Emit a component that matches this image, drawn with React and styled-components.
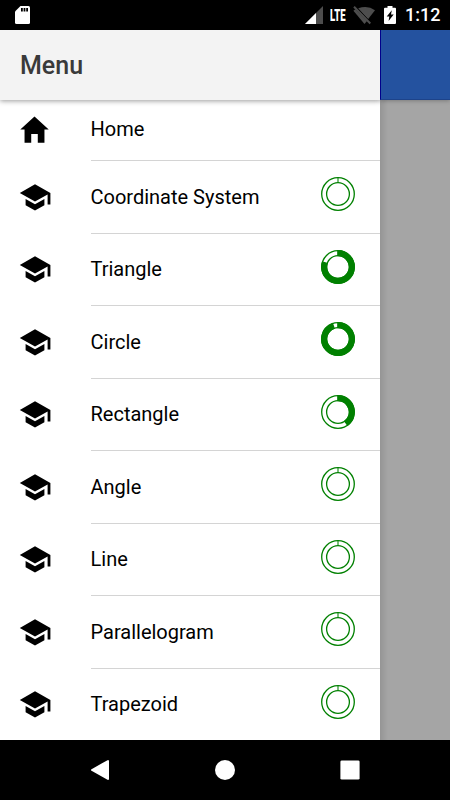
import React from 'react'
import styled, { createGlobalStyle } from 'styled-components'

const lessons = [
    { name: 'Coordinate System', progress: 0 },
    { name: 'Triangle', progress: 0.8 },
    { name: 'Circle', progress: 0.945 },
    { name: 'Rectangle', progress: 0.4 },
    { name: 'Angle', progress: 0 },
    { name: 'Line', progress: 0 },
    { name: 'Parallelogram', progress: 0 },
    { name: 'Trapezoid', progress: 0 }
]

const polar = (radius, turn) => {
    const angle = turn * 2 * Math.PI
    return `${18 + radius * Math.sin(angle)} ${18 - radius * Math.cos(angle)}`
}

function ProgressRing ({ value }){
    const large = value > 0.5 ? 1 : 0
    const arc = `M${polar(16.3, 0)}A16.3 16.3 0 ${large} 1 ${polar(16.3, value)}L${polar(11.4, value)}A11.4 11.4 0 ${large} 0 ${polar(11.4, 0)}Z`

    return <Ring viewBox='0 0 36 36'>
        <circle cx='18' cy='18' r='16.3' />
        <circle cx='18' cy='18' r='11.4' />
        <path d='M18 1.7V6.6' opacity='0.8' />
        {value > 0 && <path d={arc} fill='#008000' />}
    </Ring>
}

function HomeIcon (){
    return <ItemIcon viewBox='0 0 512 512'>
        <path d='M208 448V320h96v128h97.6V256H464L256 64 48 256h62.4v192z' />
    </ItemIcon>
}

function SchoolIcon (){
    return <ItemIcon viewBox='0 0 35 35'>
        <path d='M8.6 18.9v6.3l9.4 5.2 9.4-5.2v-6.3L18 24.2zM18 4.2L2.8 12.9 18 21.6l12.6-7.1v10.1h2.8V12.9z' />
    </ItemIcon>
}

function StatusBar (){
    return <Status>
        <svg width='15' height='18' viewBox='0 0 15 18'>
            <path fill='#fff' d='M5.5 0H13.5Q15 0 15 1.5V16.5Q15 18 13.5 18H1.5Q0 18 0 16.5V5.5z' />
            <path fill='#000' d='M6 2h1.8v3.6H6zM8.6 2h1.8v3.6H8.6zM11.2 2H13v3.6h-1.8z' />
        </svg>
        <StatusRight>
            <svg width='18' height='18' viewBox='0 0 18 18'>
                <path fill='#4d4d4d' d='M0 18L18 0v18z' />
                <path fill='#fff' d='M0 18L11 7v11z' />
            </svg>
            <Network>LTE</Network>
            <svg width='22' height='19' viewBox='0 0 22 19'>
                <path fill='#4d4d4d' d='M5.2 2.3Q14.5-1.3 22 4.2L15 13.2z' />
                <path fill='#4d4d4d' d='M2.3 3.2L14 14.9 11.5 18 .4 4.8z' />
                <path stroke='#000' strokeWidth='1' d='M2.6 1L18.6 17' />
                <path stroke='#4d4d4d' strokeWidth='2' d='M1 .8L17.3 17.5' />
            </svg>
            <Battery viewBox='0 0 12 18'>
                <path fill='#fff' d='M3.5 0h5v1.8H11q1 0 1 1V17q0 1-1 1H1q-1 0-1-1V2.8q0-1 1-1h2.5z' />
                <path fill='#000' d='M7.8 4.3L2.7 10.6h2.6L4.6 15 9.7 8.6H7z' />
            </Battery>
            <Clock>1:12</Clock>
        </StatusRight>
    </Status>
}

function App (){
    return <Screen>
        <GlobalStyle />
        <StatusBar />
        <Content>
            <Drawer>
                <Header>Menu</Header>
                <List>
                    <HomeItem>
                        <HomeIcon />
                        <ItemBody>
                            <Label>Home</Label>
                        </ItemBody>
                    </HomeItem>
                    {lessons.map(({ name, progress }) => (
                        <Item key={name}>
                            <SchoolIcon />
                            <ItemBody>
                                <Label>{name}</Label>
                                <ProgressRing value={progress} />
                            </ItemBody>
                        </Item>
                    ))}
                </List>
            </Drawer>
            <Backdrop>
                <DimmedToolbar />
            </Backdrop>
        </Content>
        <NavBar>
            <svg width='20' height='22' viewBox='0 0 20 22'>
                <path fill='#fff' stroke='#fff' strokeWidth='2' strokeLinejoin='round' d='M2 11L18 2v18z' />
            </svg>
            <svg width='20' height='20' viewBox='0 0 20 20'>
                <circle cx='10' cy='10' r='10' fill='#fff' />
            </svg>
            <svg width='20' height='20' viewBox='0 0 20 20'>
                <rect x='.4' y='.4' width='19.2' height='19.2' rx='1.4' fill='#fff' />
            </svg>
        </NavBar>
    </Screen>
}

export default App

const GlobalStyle = createGlobalStyle`
    * {
        box-sizing: border-box;
    }

    body {
        margin: 0;
        background: #000;
        font-family: Roboto, sans-serif;
    }

    svg {
        display: block;
        flex: none;
    }
`

const Screen = styled.div`
    display: flex;
    flex-direction: column;
    width: 450px;
    height: 800px;
    overflow: hidden;
    background: #000;
`

const Status = styled.div`
    display: flex;
    flex: none;
    align-items: center;
    justify-content: space-between;
    height: 30px;
    padding: 0 9px 0 15px;
    color: #fff;
`

const StatusRight = styled.div`
    display: flex;
    align-items: center;
`

const Network = styled.span`
    width: 17px;
    margin: 0 6px 0 7px;
    font: 900 17px/30px Roboto, sans-serif;
    transform: scaleX(0.56);
    transform-origin: left;
`

const Battery = styled.svg`
    width: 12px;
    height: 18px;
    margin-left: 9px;
`

const Clock = styled.span`
    width: 36px;
    margin-left: 9px;
    font-size: 18px;
    font-weight: 500;
    line-height: 32px;
`

const Content = styled.div`
    display: flex;
    flex: 1;
    min-height: 0;
`

const Drawer = styled.div`
    display: flex;
    flex-direction: column;
    width: 380px;
    background: #fff;
`

const Header = styled.div`
    z-index: 1;
    flex: none;
    height: 70px;
    padding-left: 20px;
    background: #f3f3f3;
    box-shadow: 0 1px 5px rgba(0, 0, 0, 0.4);
    clip-path: inset(0 0 -8px 0);
    color: #3a3a3a;
    font-size: 25px;
    font-weight: 500;
    line-height: 71px;
`

const List = styled.div`
    overflow: hidden;
`

const Item = styled.div`
    display: flex;
    align-items: center;
    height: 72.5px;
    padding-left: 17px;
`

const HomeItem = styled(Item)`
    height: 61px;
    padding-bottom: 2px;

    & > div {
        height: 61px;
        margin-bottom: -2px;
        padding-bottom: 2px;
    }
`

const ItemIcon = styled.svg`
    width: 35px;
    height: 35px;
    fill: #000;
`

const ItemBody = styled.div`
    display: flex;
    flex: 1;
    align-items: center;
    justify-content: space-between;
    align-self: stretch;
    margin-left: 38.5px;
    padding-right: 24px;
    border-bottom: 1px solid #d4d4d4;
`

const Label = styled.span`
    color: #000;
    font-size: 20px;
    line-height: 24px;
`

const Ring = styled.svg`
    width: 36px;
    height: 36px;
    margin-bottom: 5px;
    fill: none;
    stroke: #008000;
    stroke-width: 1.3;
`

const Backdrop = styled.div`
    flex: 1;
    background: linear-gradient(to right, #959595, #a5a5a5 8px);
`

const DimmedToolbar = styled.div`
    height: 70px;
    border-left: 1px solid #00008b;
    border-bottom: 1px solid #1d438a;
    background: #24529f;
    box-shadow: 0 1px 4px rgba(0, 0, 0, 0.25);
`

const NavBar = styled.div`
    display: flex;
    flex: none;
    align-items: center;
    justify-content: space-between;
    height: 60px;
    padding: 0 90px;
`
